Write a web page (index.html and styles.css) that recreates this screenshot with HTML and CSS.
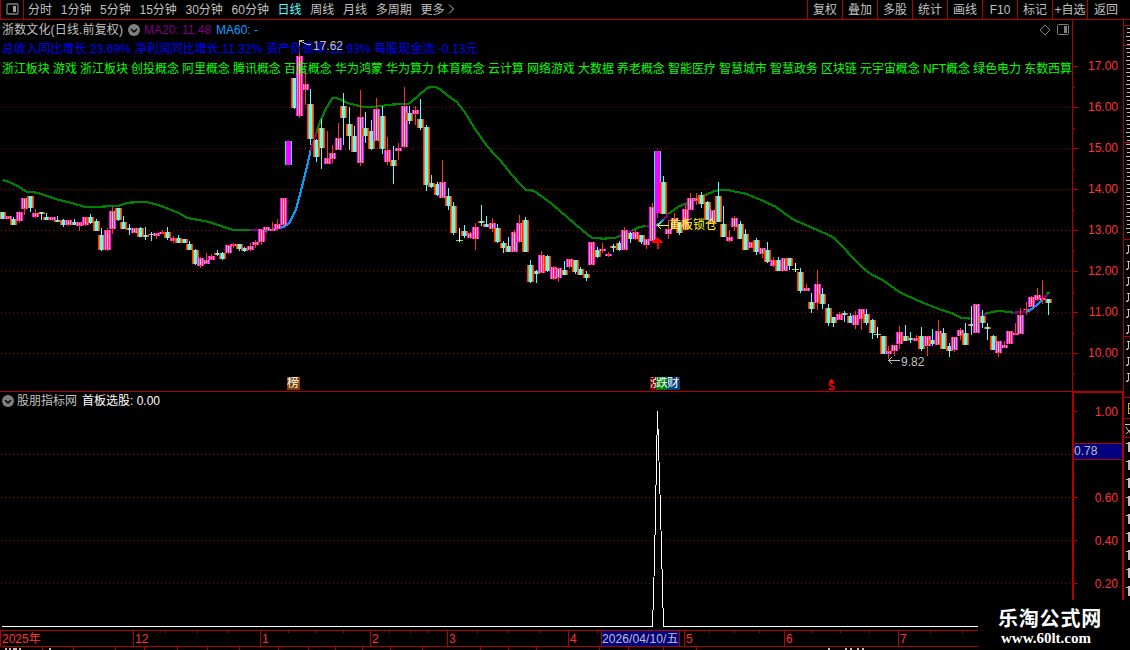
FILE: index.html
```html
<!DOCTYPE html>
<html lang="zh-CN">
<head>
    <meta charset="UTF-8">
    <title>浙数文化 日线</title>
    <link rel="stylesheet" href="styles.css">
</head>
<body>

    <!-- Period toolbar -->
    <div class="toolbar">
        <div class="layout-btn">
            <svg width="14" height="12" viewBox="0 0 14 12"><rect x="1" y="1" width="11" height="10" rx="1" fill="none" stroke="#808080" stroke-width="1.3"/><rect x="7" y="3" width="3" height="6" fill="#a0a0a0"/></svg>
        </div>
        <div class="periods">
            <span>分时</span><span>1分钟</span><span>5分钟</span><span>15分钟</span><span>30分钟</span><span>60分钟</span>
            <span class="active">日线</span><span>周线</span><span>月线</span><span>多周期</span>
            <span class="more">更多<svg width="6" height="10" viewBox="0 0 6 10"><path d="M1 0.5L5.5 5L1 9.5" fill="none" stroke="#c0c0c0"/></svg></span>
        </div>
        <div class="tools">
            <span>复权</span><span>叠加</span><span>多股</span><span>统计</span><span>画线</span><span>F10</span><span>标记</span><span>+自选</span><span>返回</span>
        </div>
    </div>

    <div class="main">
        <div class="charts">

            <!-- Candles -->
            <div class="panel price-panel">
                <div class="plot">
                    <svg class="canvas" id="price" width="1072" height="371" viewBox="0 20 1072 371"></svg>
                    <div class="title-row">
                        <span class="name">浙数文化(日线.前复权)</span>
                        <svg class="drop" width="12" height="12" viewBox="0 0 12 12"><circle cx="6" cy="6" r="6" fill="#808080"/><path d="M3 5L6 8L9 5" fill="none" stroke="#000" stroke-width="1.5"/></svg>
                        <span class="ma20">MA20: 11.48</span>
                        <span class="ma60">MA60: -</span>
                        <span class="corner">
                            <svg width="12" height="12" viewBox="0 0 12 12"><path d="M6 1L11 6L6 11L1 6Z" fill="none" stroke="#808080"/></svg>
                            <svg width="12" height="12" viewBox="0 0 12 12"><rect x="0.5" y="0.5" width="11" height="10" rx="1" fill="none" stroke="#808080"/><rect x="7" y="2" width="3" height="7" fill="#808080"/></svg>
                        </span>
                    </div>
                    <div class="finance">总收入同比增长:23.69% 净利润同比增长:11.32% 资产负债率:12.93% 每股现金流:-0.13元</div>
                    <div class="concepts">浙江板块 游戏 浙江板块 创投概念 阿里概念 腾讯概念 百度概念 华为鸿蒙 华为算力 体育概念 云计算 网络游戏 大数据 养老概念 智能医疗 智慧城市 智慧政务 区块链 元宇宙概念 NFT概念 绿色电力 东数西算</div>
                    <svg class="canvas" id="notes" width="1072" height="371" viewBox="0 20 1072 371"></svg>
                    <span class="tag tag-list">榜</span>
                    <div class="tag-group"><span class="tag up">涨</span><span class="tag down">跌</span><span class="tag fin">财</span></div>
                </div>
                <div class="axis price-axis">
                    <svg class="ticks" id="priceTicks" width="8" height="371" viewBox="1072 20 8 371"></svg>
                    <span>17.00</span><span>16.00</span><span>15.00</span><span>14.00</span><span>13.00</span><span>12.00</span><span>11.00</span><span>10.00</span>
                </div>
            </div>

            <!-- Signal indicator -->
            <div class="panel signal-panel">
                <div class="plot">
                    <svg class="canvas" id="signal" width="1072" height="238" viewBox="0 392 1072 238"></svg>
                    <div class="signal-title">
                        <svg width="12" height="12" viewBox="0 0 12 12"><circle cx="6" cy="6" r="6" fill="#808080"/><path d="M3 5L6 8L9 5" fill="none" stroke="#000" stroke-width="1.5"/></svg>
                        <span class="src">股朋指标网</span><span class="val">首板选股: 0.00</span>
                    </div>
                </div>
                <div class="axis signal-axis">
                    <svg class="ticks" id="signalTicks" width="8" height="207" viewBox="1072 392 8 207"></svg>
                    <span>1.00</span><span class="blank"></span><span>0.60</span><span>0.40</span><span>0.20</span>
                    <div class="cursor-value">0.78</div>
                </div>
            </div>

            <!-- Time axis -->
            <div class="timeline">
                <span>2025年</span><span>12</span><span>1</span><span>2</span><span>3</span><span>4</span><span>5</span><span>6</span><span>7</span>
                <svg class="time-ticks" id="timeTicks" width="978" height="20" viewBox="0 630 978 20"></svg>
                <div class="cursor-date">2026/04/10/五</div>
            </div>
        </div>

        <svg class="side" id="side" width="7" height="630" viewBox="1123 20 7 630"></svg>
    </div>

    <div class="site">
        <div class="site-name">乐淘公式网</div>
        <div class="site-url">www.60lt.com</div>
    </div>

    <script src="chart.js"></script>
</body>
</html>
```
FILE: styles.css
```css
* {
    box-sizing: border-box;
}
body {
    margin: 0;
    width: 1130px;
    height: 650px;
    overflow: hidden;
    position: relative;
    background: #000;
    color: #c0c0c0;
    font-family: "Liberation Sans", "Noto Sans CJK SC", sans-serif;
    font-size: 12px;
    line-height: 14px;
}
svg {
    display: block;
}
.toolbar {
    display: flex;
    height: 20px;
    border-bottom: 1px solid #b00000;
}
.layout-btn {
    width: 24px;
    padding: 3px 0 0 5px;
    border-left: 1px solid #b00000;
    border-right: 1px solid #b00000;
}
.periods {
    flex: 1;
    display: flex;
    gap: 8.7px;
    padding: 3px 0 0 4px;
    white-space: nowrap;
}
.periods .active {
    color: #54ffff;
}
.more {
    display: flex;
    gap: 4px;
}
.more svg {
    margin-top: 1px;
}
.tools {
    display: flex;
    width: 323px;
}
.tools span {
    width: 35px;
    padding-top: 3px;
    text-align: center;
    border-left: 1px solid #b00000;
    white-space: nowrap;
}
.tools span:last-child {
    width: 37px;
}
.main {
    display: flex;
    height: 630px;
}
.charts {
    width: 1123px;
}
.panel {
    display: flex;
}
.plot {
    position: relative;
    width: 1072px;
    overflow: hidden;
}
.price-panel {
    height: 371px;
}
.canvas {
    position: absolute;
    left: 0;
    top: 0;
    shape-rendering: crispEdges;
}
.title-row {
    position: relative;
    display: flex;
    align-items: center;
    height: 19px;
    padding-left: 2px;
    white-space: nowrap;
}
.title-row .name {
    width: 126px;
    letter-spacing: 0.15px;
}
.title-row .ma20 {
    width: 72px;
    margin-left: 4px;
    color: #800080;
}
.title-row .ma60 {
    color: #00a0ff;
}
.corner {
    display: flex;
    gap: 6px;
    margin-left: auto;
    margin-right: 3px;
}
.finance {
    position: relative;
    padding: 3px 0 0 2px;
    height: 23px;
    color: #0000ff;
    letter-spacing: 0.07px;
    white-space: nowrap;
}
.concepts {
    position: relative;
    padding-left: 2px;
    color: #00ff00;
    letter-spacing: -0.07px;
    white-space: nowrap;
}
.tag {
    display: block;
    height: 13px;
    width: 13px;
    line-height: 13px;
    color: #fff;
    overflow: hidden;
}
.tag-list {
    position: absolute;
    left: 287px;
    top: 357px;
    background: #804000;
}
.tag-group {
    position: absolute;
    left: 650px;
    top: 357px;
    display: flex;
}
.tag.up {
    width: 6px;
    background: #800000;
}
.tag.down {
    width: 11px;
    background: #008000;
}
.tag.fin {
    background: #004080;
}
.axis {
    position: relative;
    width: 51px;
    display: flex;
    flex-direction: column;
    color: #ff3232;
    text-align: right;
}
.ticks {
    position: absolute;
    left: 0;
    top: 0;
    shape-rendering: crispEdges;
}
.price-axis {
    padding: 26px 5px 0 0;
    border-left: 1px solid #b00000;
}
.price-axis span {
    flex: none;
    height: 41px;
    line-height: 41px;
}
.price-axis .ticks {
    left: -1px;
}
.signal-panel {
    height: 239px;
    border-top: 1px solid #b00000;
}
.signal-axis {
    width: 52px;
    height: 208px;
    margin-right: -1px;
    padding-right: 4px;
    border: 2px solid #b00000;
    border-bottom: 0;
    border-top-width: 1px;
}
.signal-axis .ticks {
    left: -2px;
    top: -1px;
}
.signal-axis span {
    flex: none;
    height: 43px;
    line-height: 43px;
}
.signal-axis span:first-of-type {
    height: 41px;
    line-height: 39px;
}
.cursor-value {
    position: absolute;
    left: 0;
    top: 50px;
    width: 48px;
    height: 17px;
    line-height: 15px;
    background: #000080;
    border-top: 1px solid #b00000;
    border-bottom: 1px solid #b00000;
    color: #c0c0c0;
    text-align: left;
}
.signal-title {
    position: relative;
    display: flex;
    align-items: center;
    height: 17px;
    padding-left: 2px;
    white-space: nowrap;
}
.signal-title .src {
    margin-left: 3px;
}
.signal-title .val {
    margin-left: 5px;
    color: #fff;
}
.timeline {
    position: relative;
    display: grid;
    grid-template-columns: 133px 127px 110px 77px 121px 116px 100px 114px 80px;
    width: 978px;
    height: 17px;
    border-top: 1px solid #b00000;
    border-bottom: 1px solid #b00000;
    color: #ff3232;
    line-height: 16px;
}
.timeline span {
    border-left: 1px solid #b00000;
    padding-left: 1px;
}
.time-ticks {
    position: absolute;
    left: 0;
    top: -1px;
    shape-rendering: crispEdges;
}
.cursor-date {
    position: absolute;
    left: 601px;
    top: 0;
    width: 79px;
    height: 15px;
    background: #000080;
    color: #c0c0c0;
    border-left: 1px solid #b00000;
    border-right: 1px solid #b00000;
    letter-spacing: 0.1px;
    white-space: nowrap;
}
.site {
    position: absolute;
    right: 0;
    bottom: 0;
    width: 152px;
    height: 50px;
    padding: 8px 0 0 20px;
    background: #000;
    color: #fff;
    font-weight: bold;
    white-space: nowrap;
}
.site-name {
    font-size: 20px;
    line-height: 22px;
    letter-spacing: 0.8px;
}
.site-url {
    padding-left: 3px;
    font-family: "Liberation Serif", serif;
    font-size: 15px;
    line-height: 17px;
}
```
FILE: chart.js
```js
// kind, body top, body bottom, high, low
// u = up, d = down, x = flat, l = limit up
const candles = `
d 212 219|u 216 219|d 219 225 217 225|u 212 221 211 223|u 198 209 198 215|d 196 208 196 212|u 213 217 209 218|d 212 214 212 220
d 217 220 213 220|u 217 220 217 221|d 220 222 216 222|d 220 225 219 227|u 220 225 220 226|d 222 225 219 225|u 222 226 222 231|u 217 225 217 226
d 217 223 214 224|d 221 231 219 231|d 235 250 228 251|u 230 250 228 251|u 211 229 207 234|d 208 220 208 221|d 222 229 216 229|d 228 230 224 235
u 228 233|d 228 237 227 237|d 235 237 227 240|d 234 235 232 241|u 233 236 233 239|u 232 234 230 234|d 232 238 227 240|u 238 241 236 243
d 238 243 235 243|d 239 243|d 244 250 241 250|d 250 264 249 265|u 258 266 257 268|u 260 264 253 264|u 256 260 254 260|d 253 255 250 256
d 253 259 252 260|u 245 253 245 254|u 244 246 243 248|d 244 249 244 251|d 248 251 247 252|u 246 250 243 251|u 242 245 240 248|u 229 242 229 245
u 227 230 227 233|u 229 231 222 231|u 224 229 219 231|u 198 225 198 226|l 141 165|d 78 108 78 109|u 56 116 41 118|u 84 90 70 105
d 104 139 89 145|d 140 157 139 162|d 128 148 119 169|u 158 164 131 164|u 153 159 145 163|u 138 150 123 150|d 106 118 93 145|d 124 136 107 150
d 136 152 126 152|u 117 163 90 166|d 128 136 112 143|d 131 149 120 150|u 109 141 98 141|d 116 149 106 154|u 150 162 137 165|d 160 166 146 184
u 148 151 143 160|u 106 147 87 148|d 113 121 106 124|u 110 114 106 125|d 119 128 99 130|d 127 185 125 191|d 183 187 175 188|d 184 195 182 196
u 182 198 160 198|d 196 206 188 210|d 206 233 202 235|x 240 241 228 242|d 231 236 225 238|u 233 238 232 239|u 227 239 223 250|d 221 223 205 226
d 224 227 216 227|u 223 229 218 232|d 228 242 224 243|d 243 248 241 253|d 246 252 237 252|u 232 252 230 252|u 223 242 215 243|d 220 252 217 252
d 265 282 260 283|d 271 274 270 283|u 255 273 251 273|d 256 271 255 272|u 267 279 266 280|u 268 278 268 282|d 270 275 261 275|u 259 267 259 269
d 260 272 260 274|d 269 275 267 275|d 274 278 271 281|u 242 265|d 250 257 247 258|u 249 251 243 253|u 254 256 252 257|d 246 248 244 252
d 243 250 241 251|u 230 250 227 250|d 233 239 232 243|u 232 239 230 240|d 235 242 235 244|u 239 245 239 249|u 207 241 203 242|l 151 213 151 218
d 182 214 176 214|u 229 234 220 239|u 218 229 213 229|d 222 233 222 235|u 209 229 204 230|u 198 210 193 210|u 198 201 193 205|d 195 204 192 208
d 202 220 201 220|u 210 223|d 196 222 182 222|d 224 237 206 237|u 237 241 230 242|u 218 227 216 231|d 224 239 221 239|d 234 250 229 250
u 242 248|d 240 252 238 255|u 248 254 248 258|d 250 262 242 263|u 260 266 257 267|d 260 271 257 271|u 258 271|d 258 266 258 270
x 269 270 263 272|d 272 291 268 293|u 288 291 284 291|d 302 309 293 313|u 284 303 270 310|d 294 304 288 309|d 308 323 304 326|d 317 323 317 327
u 314 320 312 320|d 313 315 311 322|d 316 323 313 323|u 315 325 311 329|u 309 319 309 330|d 314 323 309 325|d 320 333 319 339|x 334 335 327 338
d 336 354|u 351 354 346 359|u 345 351 345 356|u 332 344 326 349|d 336 341 325 341|d 338 340 332 343|u 338 341 335 341|d 336 349 327 351
u 336 346 336 356|d 340 344 329 346|u 331 345 320 345|d 333 349 328 349|d 346 351 343 357|u 337 350 337 352|u 330 336 328 340|d 333 345 323 345
d 324 326 306 335|u 304 333|d 316 323 310 328|d 327 329 323 340|d 336 350 335 350|u 341 353 341 357|u 345 348 341 348|u 331 344
u 333 335 323 335|u 315 334 308 334|u 309 310 302 315|u 297 307 296 307|u 295 300 288 301|u 298 300 280 304|d 299 303 299 315
`.trim().split(/[|\n]/).map(row => row.split(' '));

const RED = '#b00000';

function rect(x, y, w, h, fill) {
    return `<rect x="${x}" y="${y}" width="${w}" height="${h}" fill="${fill}"/>`;
}
function line(points, color, width) {
    return `<polyline points="${points}" fill="none" stroke="${color}" stroke-width="${width}"/>`;
}
function grid(y) {
    let dots = '';
    for (let x = 1; x < 1072; x += 4) dots += `M${x} ${y}h1v1h-1z`;
    return `<path d="${dots}" fill="${RED}"/>`;
}

const stripes = {
    u: ['#ff00ff', '#ff80ff', '#ff3232', '#ffd0ff', '#ff3232', '#ff80ff', '#ff00ff'],
    d: ['#ff3200', '#ff8000', '#54ffff', '#54ffff', '#54ffff', '#ff8000', '#ff3200']
};

function candle(row, i) {
    const kind = row[0];
    const [top, bottom, high = top, low = bottom] = row.slice(1).map(Number);
    const x = Math.floor(2.7 + 5.503 * i);
    const h = Math.max(bottom - top, 1);
    if (kind === 'x') {
        return rect(x - 3, top, 7, 1, '#54ff54') + rect(x, high, 1, low - high, '#fff');
    }
    if (kind === 'l') {
        return rect(x - 3, top, 7, h, '#00ffff') + rect(x - 2, top, 5, h, '#ff00ff') + rect(x, high, 1, low - high, '#ff00ff');
    }
    let out = stripes[kind].map((c, n) => rect(x - 3 + n, top, 1, h, c)).join('');
    const wick = kind === 'u' ? '#ff3232' : '#54ffff';
    out += rect(x, high, 1, top - high, wick) + rect(x, bottom, 1, low - bottom, wick);
    if (kind === 'u') {
        out += rect(x - 1, top, 3, 1, wick) + rect(x - 1, bottom - 1, 3, 1, wick);
    }
    return out;
}

// moving average, coloured by trend
const green = '#008000', purple = '#800080', blue = '#00a0ff';
const average = [
    [green, '2,179 10,182 18,186 26,191 36,192 46,195 58,199 70,202 84,206 100,206 118,205 128,202 145,201 160,205 180,213 186,217 207,221 220,225 232,229 250,229'],
    [purple, '250,229 264,230'],
    [blue, '264,230 272,229 284,226 289,222 295,210 300,192 306,168 310,150'],
    [purple, '310,150 316,132'],
    [green, '316,132 320,120 325,109 332,97 338,98 346,102 362,106 375,106 390,104 408,103 412,100 420,93 427,87 434,86 440,89 450,97 456,101 464,111 475,129 487,146 500,160 512,175 525,189 533,190 550,202 565,215 580,228 591,237 603,238 615,237 620,235'],
    [purple, '620,235 632,230'],
    [green, '632,230 637,227 646,225'],
    [purple, '646,225 656,226'],
    [blue, '656,225 663,219'],
    [purple, '663,219 668,213'],
    [green, '668,213 678,206 690,201 703,195 715,190 727,189 735,191 745,193 760,199 775,206 793,219 807,225 823,232 833,237 843,247 857,262 868,272 883,280 900,292 920,301 940,309 950,312 960,317 970,318'],
    [purple, '970,318 978,318 985,313'],
    [green, '985,313 998,310 1013,312'],
    [purple, '1013,312 1027,311'],
    [blue, '1027,311 1033,307 1038,303 1042,299'],
    [purple, '1042,299 1048,293'],
    [green, '1045,292 1049,292']
];

let svg = '';
for (let y = 66; y <= 353; y += 41) svg += grid(y === 66 ? 65 : y);
svg += '<g transform="translate(0.5 0.7)">' + average.map(a => line(a[1], a[0], 2.2)).join('') + '</g>';
svg += candles.map(candle).join('');
document.getElementById('price').innerHTML = svg;

// labels that sit on the candles
document.getElementById('notes').innerHTML =
    line('299.5,45 299.5,40.5 304,40.5', '#c0c0c0', 1) + line('300,41 306,44 311,44.5', '#c0c0c0', 1) +
    '<text x="313" y="50" fill="#c0c0c0">17.62</text>' +
    line('900,360.5 888,360.5', '#c0c0c0', 1) + line('892,357 888.5,360.5 892,364', '#c0c0c0', 1) +
    '<text x="901" y="366" fill="#c0c0c0">9.82</text>' +
    line('669,225.5 658,225.5', '#ffff00', 1) + line('661,222 657.5,225.5 661,229', '#ffff00', 1) +
    '<text x="669" y="229" fill="#ffff00">首板锁仓</text>' +
    '<path d="M657.5 237L663 243H652Z" fill="#ff0000"/>' + rect(657, 243, 2, 6, '#ff0000') +
    '<path d="M831.5 379L834 382H829Z" fill="#ff0000"/><text x="828" y="390" font-size="10" font-weight="bold" fill="#ff0000">S</text>';

let ticks = '';
for (let y = 66; y <= 353; y += 41) {
    ticks += rect(1073, y, 5, 1, RED) + rect(1073, y + 21, 2, 1, RED);
}
document.getElementById('priceTicks').innerHTML = ticks;

document.getElementById('signal').innerHTML = [454, 497, 540, 583].map(grid).join('') +
    line('2,626.5 652.5,626.5 654.5,560 657.5,411', '#fff', 1) + line('657.5,411 660.5,510 663.5,626.5 1072,626.5', '#fff', 1);

ticks = '';
for (let y = 411; y <= 583; y += 43) {
    ticks += rect(1074, y, 4, 1, RED) + (y < 583 ? rect(1074, y + 22, 1, 1, RED) : '');
}
document.getElementById('signalTicks').innerHTML = ticks;

document.getElementById('timeTicks').innerHTML =
    [165, 197, 228, 288, 315, 343, 389, 410, 428, 477, 508, 539, 597, 709, 734, 759, 812, 840, 869, 930, 962].map(x => rect(x, 631, 1, 2, RED)).join('') +
    [42, 73, 115, 144, 177, 207, 239, 278, 308, 335, 362, 390, 422, 480, 508, 536, 599, 628, 663, 696].map(x => rect(x, 647, 1, 3, RED)).join('') +
    [5, 9, 13, 15, 19, 49, 828, 845, 850, 857, 862].map(x => rect(x, 648, 2, 2, '#c0c0c0')).join('');

// neighbouring window, only its left edge is visible
let side = rect(1123, 20, 1, 630, RED);
side += [25, 45, 142, 239, 336, 397, 418, 437].map(y => rect(1124, y, 6, 1, RED)).join('');
for (let y = 28; y < 236; y += 4) {
    side += rect(y % 3 ? 1127 : 1126, y, 4, 1, '#c0c0c0');
}
for (let y = 245; y < 385; y += 16) {
    side += rect(1127, y, 3, 1, '#c0c0c0') + rect(1128, y + 1, 1, 6, '#c0c0c0') + rect(1126, y + 8, 2, 1, '#c0c0c0') + rect(1127, y + 7, 2, 1, '#c0c0c0');
}
side += rect(1128, 403, 1, 11, '#c0c000') + rect(1128, 403, 2, 1, '#c0c000') + rect(1128, 408, 2, 1, '#c0c000') + rect(1128, 413, 2, 1, '#c0c000');
side += line('1125,424.5 1130,424.5', '#c0c0c0', 1) + line('1126,434 1130,430', '#c0c0c0', 1) + line('1126,427 1130,433', '#c0c0c0', 1);
for (let y = 442; y < 600; y += 18) {
    side += rect(1126, y + 1, 2, 1, '#c0c0c0') + rect(1128, y, 2, 10, '#c0c0c0');
}
document.getElementById('side').innerHTML = side;
```
